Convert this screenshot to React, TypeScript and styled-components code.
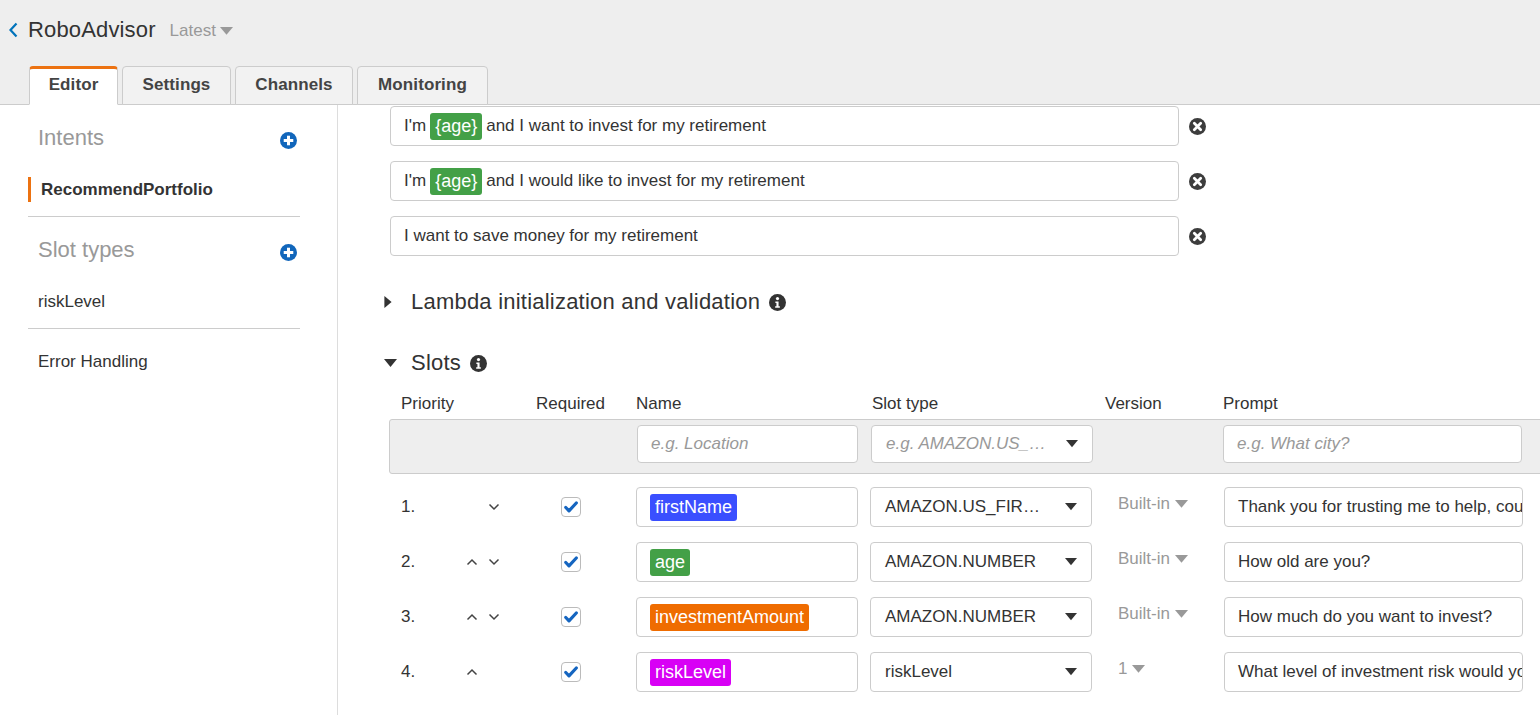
import React from "react";
import styled, { createGlobalStyle } from "styled-components";

const Global = createGlobalStyle`
  html, body { margin: 0; padding: 0; background: #fff; overflow: hidden; }
  body { font-family: "Liberation Sans", Arial, sans-serif; color: #333; }
  * { box-sizing: border-box; }
`;

const Page = styled.div`
  width: 1540px;
  height: 715px;
  display: flex;
  flex-direction: column;
  overflow: hidden;
`;

const Header = styled.header`
  background: #eeeeee;
  border-bottom: 1px solid #cccccc;
  height: 105px;
  display: flex;
  flex-direction: column;
  justify-content: space-between;
  flex-shrink: 0;
`;

const TitleRow = styled.div`
  display: flex;
  align-items: center;
  padding: 16px 0 0 8px;
  height: 44px;
`;

const BackLink = styled.span`
  display: inline-flex;
  width: 20px;
  align-items: center;
`;

const Title = styled.h1`
  margin: 0;
  font-size: 22px;
  font-weight: 400;
  color: #333;
  line-height: 26px;
  letter-spacing: 0.15px;
`;

const VersionPicker = styled.span`
  margin-left: 14px;
  font-size: 17px;
  color: #999;
  display: inline-flex;
  align-items: center;
  gap: 4px;
  padding-top: 2px;
`;

const Tabs = styled.nav`
  display: flex;
  gap: 4px;
  padding-left: 29px;
  margin-bottom: -1px;
`;

const Tab = styled.div<{ $active?: boolean; $w: number }>`
  width: ${(p) => p.$w}px;
  height: 39px;
  padding: 0 0 4px;
  display: flex;
  align-items: center;
  justify-content: center;
  font-size: 17px;
  font-weight: 700;
  color: #444;
  letter-spacing: 0.1px;
  border: 1px solid #cccccc;
  border-radius: 4px 4px 0 0;
  background: ${(p) => (p.$active ? "#ffffff" : "#f2f2f2")};
  border-top: ${(p) => (p.$active ? "3px solid #ec7211" : "1px solid #cccccc")};
  border-bottom-color: ${(p) => (p.$active ? "#ffffff" : "#cccccc")};
  padding-top: ${(p) => (p.$active ? "0" : "2px")};
`;

const Body = styled.div`
  flex: 1;
  display: flex;
  min-height: 0;
`;

const Sidebar = styled.aside`
  width: 338px;
  flex-shrink: 0;
  border-right: 1px solid #dddddd;
  padding: 20px 37px 0 28px;
  display: flex;
  flex-direction: column;
`;

const SideHeading = styled.div<{ $mt?: number }>`
  display: flex;
  justify-content: space-between;
  align-items: flex-start;
  padding-left: 10px;
  margin-top: ${(p) => p.$mt ?? 0}px;
  font-size: 22px;
  line-height: 26px;
  color: #999;
  svg { margin-top: 7px; margin-right: 3px; }
`;

const SideItem = styled.div<{ $active?: boolean; $mt?: number }>`
  margin-top: ${(p) => p.$mt ?? 26}px;
  height: 25px;
  line-height: 25px;
  font-size: 17px;
  color: #333;
  font-weight: ${(p) => (p.$active ? 700 : 400)};
  padding-left: 10px;
  border-left: ${(p) => (p.$active ? "3px solid #ec7211" : "0")};
`;

const SideDivider = styled.hr`
  margin: 14px 0 0 0;
  border: 0;
  border-top: 1px solid #cccccc;
  height: 0;
`;

const Main = styled.main`
  flex: 1;
  overflow: hidden;
  padding: 1px 0 0 52px;
  display: flex;
  flex-direction: column;
`;

const UtteranceRow = styled.div`
  display: flex;
  align-items: center;
  gap: 10px;
  & + & { margin-top: 15px; }
`;

const TextBox = styled.div<{ $w: number; $h?: number; $pl?: number }>`
  width: ${(p) => p.$w}px;
  height: ${(p) => p.$h ?? 40}px;
  border: 1px solid #cccccc;
  border-radius: 4px;
  background: #fff;
  display: flex;
  align-items: center;
  padding-left: ${(p) => p.$pl ?? 13}px;
  font-size: 17px;
  color: #333;
  white-space: nowrap;
  overflow: hidden;
  gap: 4px;
  flex-shrink: 0;
`;

const Tag = styled.span<{ $bg: string }>`
  background: ${(p) => p.$bg};
  color: #fff;
  border-radius: 3px;
  height: 27px;
  line-height: 27px;
  font-size: 18px;
  padding: 0 5px;
  display: inline-block;
`;

const Placeholder = styled.span`
  color: #999;
  font-style: italic;
`;

const Section = styled.div<{ $mt: number }>`
  display: flex;
  align-items: center;
  height: 32px;
  margin-top: ${(p) => p.$mt}px;
  font-size: 22px;
  color: #333;
`;

const Caret = styled.span`
  width: 24px;
  margin-left: -6px;
  display: inline-flex;
  justify-content: flex-start;
`;

const SectionTitle = styled.span`
  margin-left: 3px;
  margin-right: 9px;
  letter-spacing: 0.22px;
`;

const Table = styled.div`
  width: 1300px;
  margin-top: 10px;
  margin-left: -1px;
`;

const HeadRow = styled.div`
  display: flex;
  height: 30px;
  align-items: center;
  font-size: 17px;
  color: #333;
`;

const NewRow = styled.div`
  display: flex;
  align-items: flex-start;
  padding-top: 5px;
  height: 55px;
  background: #eeeeee;
  border: 1px solid #cccccc;
  border-radius: 3px 0 0 3px;
`;

const DataRows = styled.div`
  display: flex;
  flex-direction: column;
  gap: 15px;
  padding-top: 13px;
`;

const DataRow = styled.div`
  display: flex;
  align-items: center;
  height: 40px;
  font-size: 17px;
  color: #333;
`;

const Col = styled.div<{ $w: number; $pl?: number }>`
  width: ${(p) => p.$w}px;
  padding-left: ${(p) => p.$pl ?? 0}px;
  flex-shrink: 0;
  display: flex;
  align-items: center;
`;

const Num = styled.span`
  width: 65px;
`;

const Arrows = styled.span`
  display: inline-flex;
  gap: 10px;
  width: 40px;
`;

const ArrowSlot = styled.span`
  width: 12px;
  display: inline-flex;
  justify-content: center;
`;

const Check = styled.span`
  width: 20px;
  height: 20px;
  border: 1px solid #bbbbbb;
  border-radius: 4px;
  background: #fff;
  display: inline-flex;
  align-items: center;
  justify-content: center;
  margin-left: 37px;
  margin-top: -1px;
`;

const Select = styled.div<{ $w: number; $h?: number }>`
  width: ${(p) => p.$w}px;
  height: ${(p) => p.$h ?? 40}px;
  border: 1px solid #cccccc;
  border-radius: 4px;
  background: #fff;
  display: flex;
  align-items: center;
  justify-content: space-between;
  padding: 0 14px 0 14px;
  font-size: 17px;
  color: #333;
  white-space: nowrap;
  flex-shrink: 0;
`;

const VersionText = styled.span`
  color: #999;
  font-size: 17px;
  display: inline-flex;
  align-items: center;
  gap: 5px;
  margin-left: 13px;
  margin-top: -6px;
`;

const Down = ({ color = "#333", w = 12 }: { color?: string; w?: number }) => (
  <svg width={w} height={w * 0.6} viewBox="0 0 10 6">
    <polygon points="0,0 10,0 5,6" fill={color} />
  </svg>
);

const PlusCircle = () => (
  <svg width="17" height="17" viewBox="0 0 16 16">
    <circle cx="8" cy="8" r="8" fill="#1166bb" />
    <rect x="6.6" y="3.5" width="2.8" height="9" fill="#fff" />
    <rect x="3.5" y="6.6" width="9" height="2.8" fill="#fff" />
  </svg>
);

const XCircle = () => (
  <svg width="17" height="17" viewBox="0 0 16 16">
    <circle cx="8" cy="8" r="8" fill="#3d3d3d" />
    <path d="M5 5 L11 11 M11 5 L5 11" stroke="#fff" strokeWidth="2.6" strokeLinecap="round" />
  </svg>
);

const InfoCircle = () => (
  <svg width="17" height="17" viewBox="0 0 16 16">
    <circle cx="8" cy="8" r="8" fill="#333" />
    <circle cx="8" cy="4.3" r="1.5" fill="#fff" />
    <path d="M6 7 H9 V11.5 H10.2 V13 H5.8 V11.5 H7 V8.4 H6 Z" fill="#fff" />
  </svg>
);

const Chevron = ({ up }: { up?: boolean }) => (
  <svg width="12" height="8" viewBox="0 0 12 8">
    <path d={up ? "M1.5 6.5 L6 2 L10.5 6.5" : "M1.5 1.5 L6 6 L10.5 1.5"} stroke="#444" strokeWidth="1.5" fill="none" />
  </svg>
);

const CheckMark = () => (
  <svg width="14" height="12" viewBox="0 0 14 12">
    <path d="M1.8 6.5 L5 9.8 L12.3 2" stroke="#1565c0" strokeWidth="3.2" fill="none" strokeLinecap="round" strokeLinejoin="round" />
  </svg>
);

const tabs = [
  { label: "Editor", w: 89, active: true },
  { label: "Settings", w: 109 },
  { label: "Channels", w: 118 },
  { label: "Monitoring", w: 131 },
];

const utterances: { pre?: string; tag?: boolean; post: string }[] = [
  { pre: "I'm", tag: true, post: "and I want to invest for my retirement" },
  { pre: "I'm", tag: true, post: "and I would like to invest for my retirement" },
  { post: "I want to save money for my retirement" },
];

const slots = [
  { n: "1.", up: false, down: true, name: "firstName", color: "#3a4fff", type: "AMAZON.US_FIR…", ver: "Built-in", prompt: "Thank you for trusting me to help, could you please tell me your name?" },
  { n: "2.", up: true, down: true, name: "age", color: "#43a047", type: "AMAZON.NUMBER", ver: "Built-in", prompt: "How old are you?" },
  { n: "3.", up: true, down: true, name: "investmentAmount", color: "#ef6c00", type: "AMAZON.NUMBER", ver: "Built-in", prompt: "How much do you want to invest?" },
  { n: "4.", up: true, down: false, name: "riskLevel", color: "#d800f5", type: "riskLevel", ver: "1", prompt: "What level of investment risk would you be comfortable with?" },
];

export default function App() {
  return (
    <Page>
      <Global />
      <Header>
        <TitleRow>
          <BackLink>
            <svg width="11" height="16" viewBox="0 0 11 16">
              <path d="M8.5 1.5 L2.5 8 L8.5 14.5" stroke="#0073bb" strokeWidth="2.2" fill="none" />
            </svg>
          </BackLink>
          <Title>RoboAdvisor</Title>
          <VersionPicker>
            Latest <Down color="#999" w={13} />
          </VersionPicker>
        </TitleRow>
        <Tabs>
          {tabs.map((t) => (
            <Tab key={t.label} $w={t.w} $active={t.active}>
              {t.label}
            </Tab>
          ))}
        </Tabs>
      </Header>
      <Body>
        <Sidebar>
          <SideHeading>
            Intents <PlusCircle />
          </SideHeading>
          <SideItem $active>RecommendPortfolio</SideItem>
          <SideDivider />
          <SideHeading $mt={20}>
            Slot types <PlusCircle />
          </SideHeading>
          <SideItem>riskLevel</SideItem>
          <SideDivider />
          <SideItem $mt={20}>Error Handling</SideItem>
        </Sidebar>
        <Main>
          {utterances.map((u, i) => (
            <UtteranceRow key={i}>
              <TextBox $w={789}>
                {u.pre && <span>{u.pre}</span>}
                {u.tag && <Tag $bg="#43a047">{"{age}"}</Tag>}
                <span>{u.post}</span>
              </TextBox>
              <XCircle />
            </UtteranceRow>
          ))}
          <Section $mt={30}>
            <Caret>
              <svg width="8" height="12" viewBox="0 0 6 10">
                <polygon points="0,0 6,5 0,10" fill="#333" />
              </svg>
            </Caret>
            <SectionTitle>Lambda initialization and validation</SectionTitle>
            <InfoCircle />
          </Section>
          <Section $mt={29}>
            <Caret>
              <svg width="13" height="8" viewBox="0 0 10 6">
                <polygon points="0,0 10,0 5,6" fill="#333" />
              </svg>
            </Caret>
            <SectionTitle>Slots</SectionTitle>
            <InfoCircle />
          </Section>
          <Table>
            <HeadRow>
              <Col $w={135} $pl={12}>Priority</Col>
              <Col $w={112} $pl={12}>Required</Col>
              <Col $w={235}>Name</Col>
              <Col $w={234} $pl={1}>Slot type</Col>
              <Col $w={118}>Version</Col>
              <Col $w={300}>Prompt</Col>
            </HeadRow>
            <NewRow>
              <Col $w={134} />
              <Col $w={113} />
              <Col $w={234}>
                <TextBox $w={221} $h={38}>
                  <Placeholder>e.g. Location</Placeholder>
                </TextBox>
              </Col>
              <Col $w={352}>
                <Select $w={222} $h={38}>
                  <Placeholder>e.g. AMAZON.US_…</Placeholder>
                  <Down />
                </Select>
              </Col>
              <Col $w={300}>
                <TextBox $w={299} $h={38}>
                  <Placeholder>e.g. What city?</Placeholder>
                </TextBox>
              </Col>
            </NewRow>
            <DataRows>
              {slots.map((s) => (
                <DataRow key={s.n}>
                  <Col $w={135} $pl={12}>
                    <Num>{s.n}</Num>
                    <Arrows>
                      <ArrowSlot>{s.up && <Chevron up />}</ArrowSlot>
                      <ArrowSlot>{s.down && <Chevron />}</ArrowSlot>
                    </Arrows>
                  </Col>
                  <Col $w={112}>
                    <Check>
                      <CheckMark />
                    </Check>
                  </Col>
                  <Col $w={234}>
                    <TextBox $w={222}>
                      <Tag $bg={s.color}>{s.name}</Tag>
                    </TextBox>
                  </Col>
                  <Col $w={235}>
                    <Select $w={222}>
                      <span>{s.type}</span>
                      <Down />
                    </Select>
                  </Col>
                  <Col $w={119}>
                    <VersionText>
                      {s.ver} <Down color="#999" w={13} />
                    </VersionText>
                  </Col>
                  <Col $w={300}>
                    <TextBox $w={299}>{s.prompt}</TextBox>
                  </Col>
                </DataRow>
              ))}
            </DataRows>
          </Table>
        </Main>
      </Body>
    </Page>
  );
}
